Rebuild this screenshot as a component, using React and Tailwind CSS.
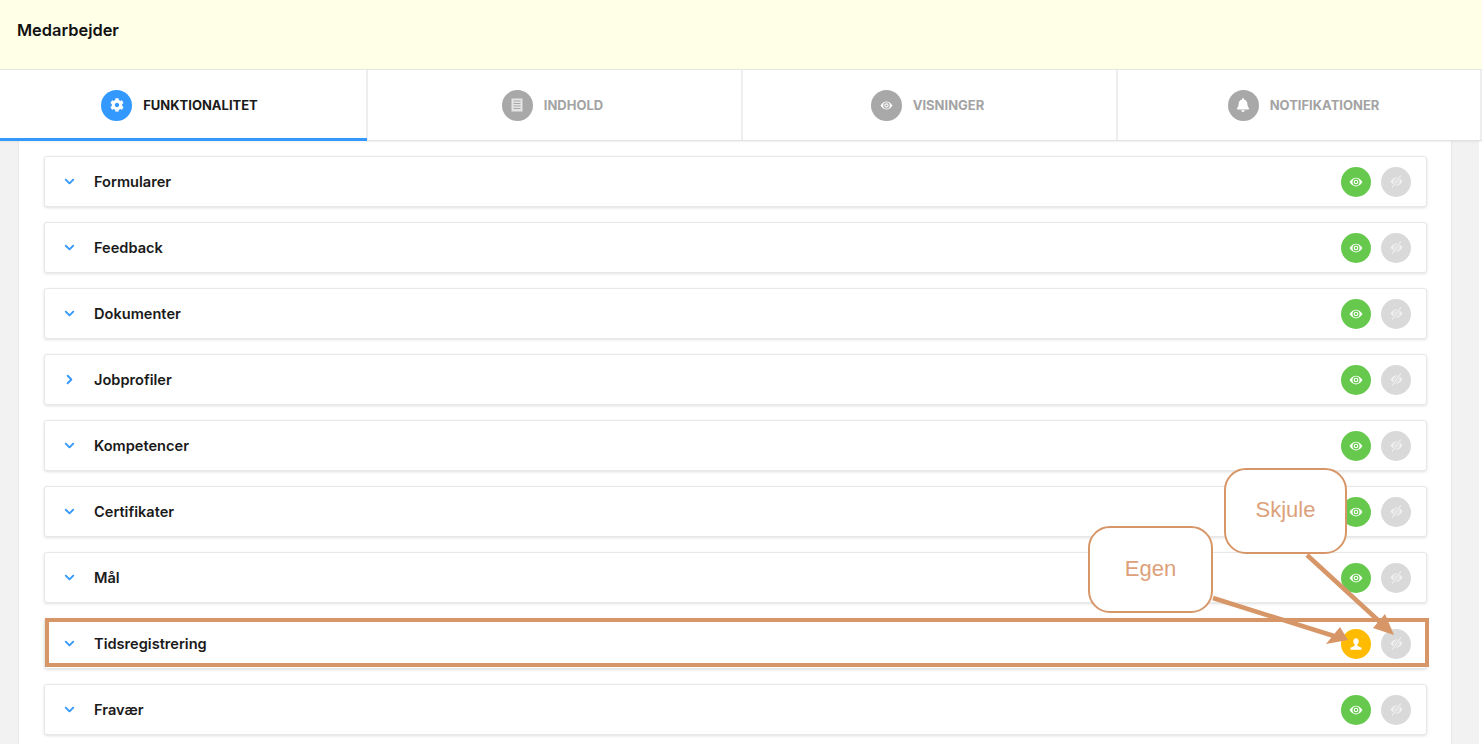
import { ChevronDown, ChevronRight } from 'lucide-react';
import { FaBell, FaCog } from 'react-icons/fa';

const rows = [
  { name: 'Formularer' },
  { name: 'Feedback' },
  { name: 'Dokumenter' },
  { name: 'Jobprofiler', closed: true },
  { name: 'Kompetencer' },
  { name: 'Certifikater' },
  { name: 'Mål' },
  { name: 'Tidsregistrering', own: true },
  { name: 'Fravær' },
];

function EyeIcon({ size = 14 }) {
  return (
    <svg width={size} height={size} viewBox="0 0 24 24" fill="none">
      <path d="M1 12c3-5 7-7.500 11-7.500S20 7 23 12c-3 5-7 7.500-11 7.500S4 17 1 12z" fill="currentColor" />
      <circle cx="12" cy="12" r="5" fill="none" stroke="var(--eye-bg)" strokeWidth="2" />
      <circle cx="12" cy="12" r="2" fill="var(--eye-bg)" />
    </svg>
  );
}

function EyeOffIcon() {
  return (
    <svg width="13" height="13" viewBox="0 0 24 24" fill="none" className="text-[#f0f0f0]">
      <path d="M1 12c3-5 7-7.500 11-7.500S20 7 23 12c-3 5-7 7.500-11 7.500S4 17 1 12z" fill="currentColor" />
      <circle cx="12" cy="12" r="4.500" fill="none" stroke="#d9d9d9" strokeWidth="2" />
      <path d="M20 1L4 23" stroke="#d9d9d9" strokeWidth="4.500" />
      <path d="M20 1L4 23" stroke="currentColor" strokeWidth="2" />
    </svg>
  );
}

function UserIcon() {
  return (
    <svg width="14" height="14" viewBox="0 0 24 24" fill="white">
      <path d="M12 2c-3 0-4.600 2.300-4.600 5.200 0 2.400 1 4.400 2.400 5.600v2L2.500 18.500V22h19v-3.500l-7.300-3.700v-2c1.400-1.200 2.400-3.200 2.400-5.600C16.600 4.300 15 2 12 2z" />
    </svg>
  );
}

function DocIcon() {
  return (
    <svg width="12" height="14" viewBox="0 0 12 14" fill="none">
      <rect x="0.500" y="0.500" width="11" height="13" fill="#e4e4e4" />
      <path d="M2.500 3h7M2.500 5.500h7M2.500 8h7M2.500 10.500h7" stroke="#a8a8a8" strokeWidth="1" />
    </svg>
  );
}

function Tab({ icon, label, active, className }) {
  return (
    <div className={`flex items-center justify-center gap-[11px] border-r-2 border-[#eeeeee] ${className}`}>
      <span className={`flex h-[31px] w-[31px] items-center justify-center rounded-full text-white ${active ? 'bg-[#3399ff]' : 'bg-[#a8a8a8] [--eye-bg:#a8a8a8]'}`}>
        {icon}
      </span>
      <span className={`pt-[2px] text-[13px] font-bold uppercase ${active ? 'text-[#1a1a1a]' : 'text-[#a3a3a3]'}`}>{label}</span>
    </div>
  );
}

function Row({ row }) {
  const Chevron = row.closed ? ChevronRight : ChevronDown;
  return (
    <div className="flex h-[51px] shrink-0 items-center rounded-[3px] border border-[#e8e8e8] bg-white pr-[15px] pl-[17px] shadow-[0_1px_3px_rgba(0,0,0,0.12)]">
      <Chevron size={15} strokeWidth={3} className="text-[#3399ff]" />
      <span className="ml-[17px] flex-1 pt-[2px] text-[14.6px] font-semibold text-[#1a1a1a]">{row.name}</span>
      <div className="flex gap-[10px]">
        {row.own ? (
          <span className="flex h-[30px] w-[30px] items-center justify-center rounded-full bg-[#ffbb00]">
            <UserIcon />
          </span>
        ) : (
          <span className="flex h-[30px] w-[30px] items-center justify-center rounded-full bg-[#66c94d] text-white [--eye-bg:#66c94d]">
            <EyeIcon />
          </span>
        )}
        <span className="flex h-[30px] w-[30px] items-center justify-center rounded-full bg-[#d9d9d9]">
          <EyeOffIcon />
        </span>
      </div>
    </div>
  );
}

export default function App() {
  return (
    <div className="relative flex h-[744px] flex-col overflow-hidden bg-white font-['Inter',sans-serif]">
      {/* Header */}
      <div className="flex h-[70px] shrink-0 items-center border-b border-[#e6e6e6] bg-[#ffffe8] pb-[9px] pl-[17px]">
        <h1 className="text-[16.4px] font-semibold text-[#111111]">Medarbejder</h1>
      </div>

      {/* Tabs */}
      <div className="relative z-10 flex h-[71px] shrink-0 border-b border-[#e2e2e2] bg-white shadow-[0_1px_2px_rgba(0,0,0,0.06)]">
        <div className="relative flex w-[368px]">
          <Tab active label="Funktionalitet" className="w-full pr-[7px]" icon={<FaCog size={14} />} />
          <div className="absolute right-[1px] -bottom-px left-0 h-[3px] bg-[#3399ff]" />
        </div>
        <Tab label="Indhold" className="w-[375px] pr-[4px]" icon={<DocIcon />} />
        <Tab label="Visninger" className="w-[375px] pr-[4px]" icon={<EyeIcon size={13} />} />
        <Tab label="Notifikationer" className="flex-1 border-r-0 pl-[9px]" icon={<FaBell size={14} />} />
      </div>

      {/* Body */}
      <div className="flex min-h-0 flex-1 bg-[#f2f2f2] pr-[3px] pl-[18px]">
        <div className="flex flex-1 flex-col gap-[15px] overflow-hidden border-x border-[#e8e8e8] bg-white pt-[15px] pr-[24px] pl-[25px]">
          {rows.map((row) => (
            <Row key={row.name} row={row} />
          ))}
        </div>
        <div className="w-[27px]" />
      </div>
      <div className="absolute top-[141px] right-0 bottom-0 w-[3px] bg-white" />

      {/* Annotations */}
      <div className="absolute top-[618px] left-[45px] h-[49px] w-[1384px] border-4 border-[#d79668]" />
      <div className="absolute top-[526px] left-[1088px] flex h-[87px] w-[125px] items-center justify-center rounded-[22px] border-2 border-[#d79668] bg-white pb-[3px] font-['Liberation_Sans',sans-serif] text-[22px] text-[#dca17a]">
        Egen
      </div>
      <div className="absolute top-[468px] left-[1224px] flex h-[86px] w-[123px] items-center justify-center rounded-[22px] border-2 border-[#d79668] bg-white pb-[3px] font-['Liberation_Sans',sans-serif] text-[22px] text-[#dca17a]">
        Skjule
      </div>
      <svg className="pointer-events-none absolute top-0 left-0" width="1482" height="744" fill="none">
        <path d="M1213 598L1334 636" stroke="#d79668" strokeWidth="4.500" />
        <path d="M1348 640L1340 627L1326 644Z" fill="#d79668" />
        <path d="M1307 555L1380 622" stroke="#d79668" strokeWidth="4.500" />
        <path d="M1394 635L1385 614L1373 628Z" fill="#d79668" />
      </svg>
    </div>
  );
}
